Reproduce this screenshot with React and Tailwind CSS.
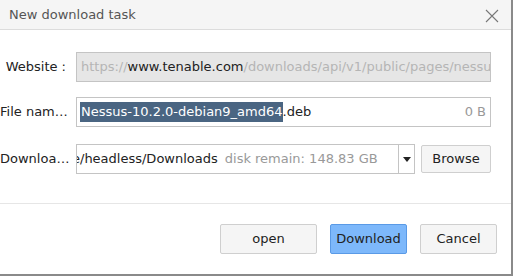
import { useState } from "react"

function Label({ children, className = "" }) {
  return (
    <div
      className={
        "w-[70px] shrink-0 overflow-hidden text-ellipsis whitespace-nowrap text-right text-[13px] text-[#222] " + className
      }
    >
      {children}
    </div>
  )
}

export default function App() {
  const [name] = useState("Nessus-10.2.0-debian9_amd64")

  return (
    <div className="w-[514px] h-[277px] bg-white" style={{ fontFamily: "'DejaVu Sans', sans-serif" }}>
      <div className="w-[513px] h-[276px] flex flex-col border-r-2 border-b-2 border-[#8a8a8a] bg-white">
        {/* Title bar */}
        <div className="h-[30px] shrink-0 flex items-center justify-between pl-[9px] pr-[12px] bg-[#f5f5f5] border-b border-[#dcdcdc]">
          <span className="text-[13px] text-[#555]">New download task</span>
          <svg width="14" height="14" viewBox="0 0 14 14" className="mt-[2px]">
            <path d="M1 1 L13 13 M13 1 L1 13" stroke="#777" strokeWidth="1.1" fill="none" />
          </svg>
        </div>

        {/* Form */}
        <div className="flex flex-col pt-[22px] pr-[20px] gap-[15px]">
          <div className="flex items-center gap-[6px]">
            <Label className="pr-[4px]">Website :</Label>
            <div className="flex-1 h-[30px] flex items-center px-[4px] bg-[#e6e6e6] border border-[#c4c4c4] overflow-hidden whitespace-nowrap text-[13px]">
              <span className="text-[#b5b5b5]">https://</span>
              <span className="text-[#222]">www.tenable.com</span>
              <span className="text-[#b5b5b5]">/downloads/api/v1/public/pages/nessus/downloads</span>
            </div>
          </div>

          <div className="flex items-center gap-[6px]">
            <Label>File name :</Label>
            <div className="flex-1 h-[30px] flex items-center pl-[3px] pr-[4px] bg-white border border-[#c4c4c4] whitespace-nowrap text-[13px]">
              <span className="bg-[#4a6582] text-white pl-[1px]">{name}</span>
              <span className="text-[#222]">.deb</span>
              <span className="ml-auto text-[#999]">0 B</span>
            </div>
          </div>

          <div className="flex items-center gap-[6px] mt-[2px]">
            <Label>Download path :</Label>
            <div className="flex-1 flex items-center gap-[6px]">
              <div className="flex-1 h-[30px] flex bg-white border border-[#c4c4c4]">
                <div className="flex-1 flex items-center overflow-hidden whitespace-nowrap text-[13px] pl-[1px]">
                  <span className="ml-[-6px] text-[#222]">e/headless/Downloads</span>
                  <span className="ml-[7px] text-[#999]">disk remain: 148.83 GB</span>
                </div>
                <div className="w-[16px] flex items-center justify-center border-l border-[#c4c4c4]">
                  <svg width="8" height="5" viewBox="0 0 8 5">
                    <path d="M0 0 L8 0 L4 5 Z" fill="#222" />
                  </svg>
                </div>
              </div>
              <button className="w-[70px] h-[28px] rounded-[2px] bg-[#f5f5f5] border border-[#cfcfcf] text-[13px] text-[#222]">
                Browse
              </button>
            </div>
          </div>
        </div>

        {/* Footer */}
        <div className="mt-[29px] border-t border-[#e6e6e6] flex justify-end gap-[13px] pt-[20px] pr-[14px]">
          <button className="w-[97px] h-[30px] rounded-[2px] bg-[#f5f5f5] border border-[#cfcfcf] text-[13px] text-[#222]">
            open
          </button>
          <button className="w-[77px] h-[30px] rounded-[2px] bg-[#7db8fb] border border-[#5a9ae6] text-[13px] text-[#222]">
            Download
          </button>
          <button className="w-[77px] h-[30px] rounded-[2px] bg-[#f5f5f5] border border-[#cfcfcf] text-[13px] text-[#222]">
            Cancel
          </button>
        </div>
      </div>
    </div>
  )
}
